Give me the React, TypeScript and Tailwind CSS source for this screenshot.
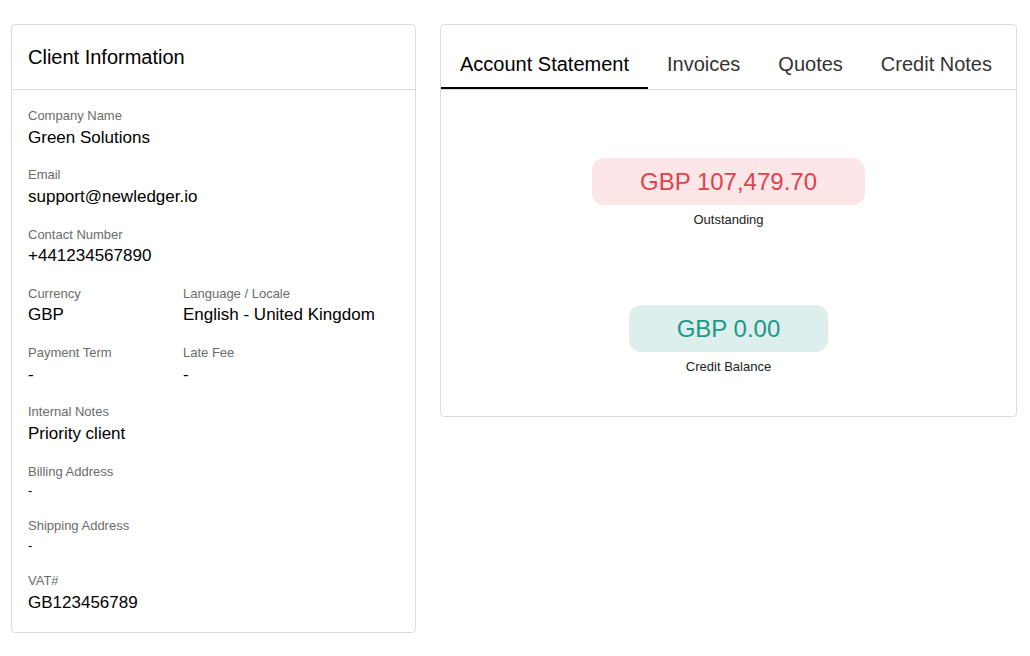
import React from 'react'

type Field = { label: string; value: string; small?: boolean }

function InfoField({ label, value, small }: Field) {
  return (
    <div className="flex flex-col">
      <span className="text-[13px] leading-[19.5px] text-[#6b6b6b]">{label}</span>
      <span className={small ? 'text-[13px] leading-[19.5px] text-black' : 'text-[17px] leading-6 text-black'}>{value}</span>
    </div>
  )
}

function ClientInformation() {
  return (
    <div className="w-[405px] border border-[#dcdcdc] rounded bg-white">
      <div className="h-[65px] flex items-center px-4 border-b border-[#dcdcdc]">
        <h2 className="text-[20px] text-black -mt-[1px]">Client Information</h2>
      </div>
      <div className="px-4 pt-4 pb-[17px] flex flex-col gap-[15.75px]">
        <InfoField label="Company Name" value="Green Solutions" />
        <InfoField label="Email" value="support@newledger.io" />
        <InfoField label="Contact Number" value="+441234567890" />
        <div className="grid grid-cols-[155px_1fr]">
          <InfoField label="Currency" value="GBP" />
          <InfoField label="Language / Locale" value="English - United Kingdom" />
        </div>
        <div className="grid grid-cols-[155px_1fr]">
          <InfoField label="Payment Term" value="-" />
          <InfoField label="Late Fee" value="-" />
        </div>
        <InfoField label="Internal Notes" value="Priority client" />
        <InfoField label="Billing Address" value="-" small />
        <InfoField label="Shipping Address" value="-" small />
        <InfoField label="VAT#" value="GB123456789" />
      </div>
    </div>
  )
}

function AccountPanel() {
  const tabs = ['Account Statement', 'Invoices', 'Quotes', 'Credit Notes']
  return (
    <div className="w-[577px] border border-[#dcdcdc] rounded bg-white">
      <ul className="flex h-[65px] border-b border-[#dcdcdc] list-none m-0 p-0">
        {tabs.map((t, i) => (
          <li
            key={t}
            className={`flex shrink-0 items-end whitespace-nowrap px-[19px] pb-[11px] text-[20px] leading-6 ${
              i === 0 ? 'text-black border-b-2 border-black' : 'text-[#333] border-b-2 border-transparent'
            }`}
          >
            {t}
          </li>
        ))}
      </ul>
      <div className="flex flex-col items-center pt-[68px] pb-[39px]">
        <div className="flex flex-col items-center">
          <div className="px-12 h-[47px] flex items-center rounded-[12px] bg-[#fde6e8] text-[24px] text-[#e0434b]">
            GBP 107,479.70
          </div>
          <span className="mt-[5px] text-[13px] leading-5 text-[#222]">Outstanding</span>
        </div>
        <div className="flex flex-col items-center mt-[75px]">
          <div className="px-12 h-[47px] flex items-center rounded-[12px] bg-[#dcefed] text-[24px] text-[#1c988a]">
            GBP 0.00
          </div>
          <span className="mt-[5px] text-[13px] leading-5 text-[#222]">Credit Balance</span>
        </div>
      </div>
    </div>
  )
}

export default function App() {
  return (
    <div
      className="min-h-screen bg-white flex items-start gap-[24px] pl-[11px] pt-[24px]"
      style={{ fontFamily: '"Liberation Sans", Arial, sans-serif' }}
    >
      <ClientInformation />
      <AccountPanel />
    </div>
  )
}
